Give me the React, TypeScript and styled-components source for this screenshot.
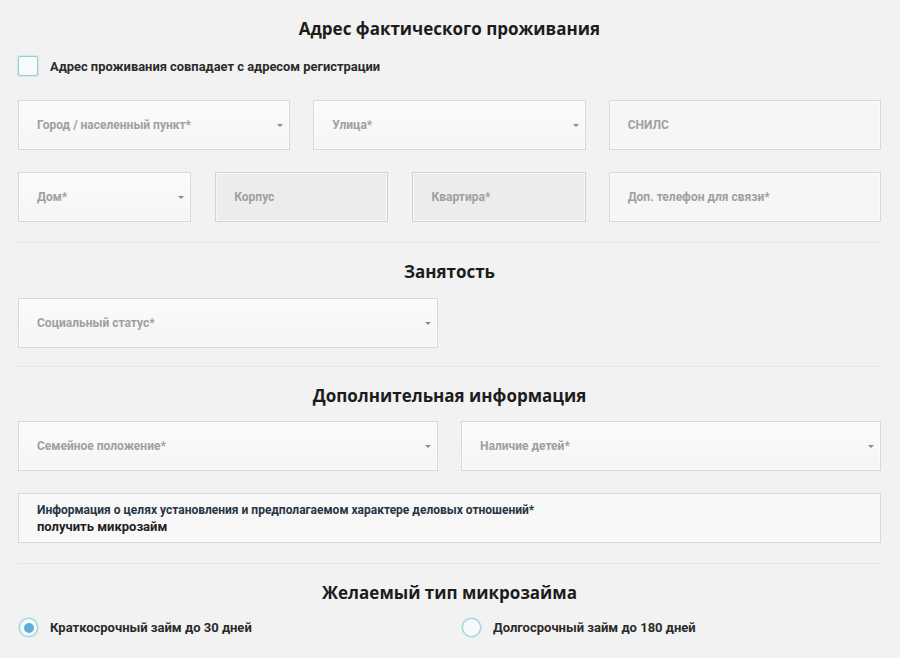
import styled, { createGlobalStyle } from 'styled-components';
import { useState } from 'react';

const GlobalStyle = createGlobalStyle`
  html, body {
    margin: 0;
    padding: 0;
    background: #f2f2f2;
  }
  body {
    font-family: Roboto, "Noto Sans", sans-serif;
  }
`;

type LoanType = 'short' | 'long';

function App() {
  const [same, setSame] = useState(false);
  const [loan, setLoan] = useState<LoanType>('short');

  return (
    <Page>
      <GlobalStyle />
      <Title>Адрес фактического проживания</Title>
      <CheckRow onClick={() => setSame(!same)}>
        <CheckBox $checked={same} />
        <CheckLabel>Адрес проживания совпадает с адресом регистрации</CheckLabel>
      </CheckRow>

      <Grid3 $top={24}>
        <Field $select>
          <Placeholder>Город / населенный пункт*</Placeholder>
          <Arrow />
        </Field>
        <Field $select>
          <Placeholder>Улица*</Placeholder>
          <Arrow />
        </Field>
        <Field>
          <Placeholder>СНИЛС</Placeholder>
        </Field>
      </Grid3>

      <Grid3 $top={22}>
        <Wide>
          <Field $select>
            <Placeholder>Дом*</Placeholder>
            <Arrow />
          </Field>
          <Field $disabled>
            <Placeholder>Корпус</Placeholder>
          </Field>
          <Field $disabled>
            <Placeholder>Квартира*</Placeholder>
          </Field>
        </Wide>
        <Field>
          <Placeholder>Доп. телефон для связи*</Placeholder>
        </Field>
      </Grid3>

      <Divider $top={20} />

      <Title>Занятость</Title>
      <Grid2 $top={14}>
        <Field $select>
          <Placeholder>Социальный статус*</Placeholder>
          <Arrow />
        </Field>
      </Grid2>

      <Divider $top={18} />

      <Title>Дополнительная информация</Title>
      <Grid2 $top={13}>
        <Field $select>
          <Placeholder>Семейное положение*</Placeholder>
          <Arrow />
        </Field>
        <Field $select>
          <Placeholder>Наличие детей*</Placeholder>
          <Arrow />
        </Field>
      </Grid2>

      <InfoBox>
        <InfoLabel>
          Информация о целях установления и предполагаемом характере деловых отношений*
        </InfoLabel>
        <InfoValue>получить микрозайм</InfoValue>
      </InfoBox>

      <Divider $top={20} />

      <Title>Желаемый тип микрозайма</Title>
      <Grid2 $top={13}>
        <RadioRow onClick={() => setLoan('short')}>
          <Radio $checked={loan === 'short'} />
          <RadioLabel>Краткосрочный займ до 30 дней</RadioLabel>
        </RadioRow>
        <RadioRow onClick={() => setLoan('long')}>
          <Radio $checked={loan === 'long'} />
          <RadioLabel>Долгосрочный займ до 180 дней</RadioLabel>
        </RadioRow>
      </Grid2>
      <BottomShade />
    </Page>
  );
}

export default App;

const Page = styled.div`
  width: 863px;
  padding: 17px 19px 0 18px;
  height: 658px;
  box-sizing: content-box;
  overflow: hidden;
  position: relative;
`;

const Title = styled.h2`
  margin: 0;
  text-align: center;
  font-family: "Open Sans", "Noto Sans", sans-serif;
  font-weight: 700;
  font-size: 17px;
  line-height: 24px;
  color: #1c1c1c;
`;

const CheckRow = styled.label`
  display: flex;
  align-items: center;
  gap: 12px;
  margin-top: 15px;
  cursor: pointer;
`;

const CheckBox = styled.span<{ $checked: boolean }>`
  width: 18px;
  height: 18px;
  border: 1px solid #8fcfdc;
  border-radius: 2px;
  background: ${(p) => (p.$checked ? '#5aaed8' : '#f9fbfb')};
  box-shadow: 0 0 0 1px rgba(143, 207, 220, 0.25);
`;

const CheckLabel = styled.span`
  font-size: 12.9px;
  font-weight: 700;
  color: #2b2b2b;
`;

const Grid3 = styled.div<{ $top: number }>`
  display: grid;
  grid-template-columns: 1fr 1fr 1fr;
  gap: 23px;
  margin-top: ${(p) => p.$top}px;
`;

const Wide = styled.div`
  grid-column: span 2;
  display: grid;
  grid-template-columns: 1fr 1fr 1fr;
  gap: 24px;
`;

const Grid2 = styled.div<{ $top: number }>`
  display: grid;
  grid-template-columns: 420px 420px;
  justify-content: space-between;
  margin-top: ${(p) => p.$top}px;
`;

const Field = styled.div<{ $select?: boolean; $disabled?: boolean }>`
  position: relative;
  height: 50px;
  box-sizing: border-box;
  display: flex;
  align-items: center;
  padding: 0 18px;
  border: 1px solid ${(p) => (p.$disabled ? '#d2d2d2' : '#d8d8d8')};
  background: ${(p) =>
    p.$disabled
      ? '#ececec'
      : p.$select
      ? 'linear-gradient(#fbfbfb, #f5f5f5)'
      : '#f6f6f6'};
  box-shadow: inset 0 0 0 1px rgba(255, 255, 255, 0.6);
`;

const Placeholder = styled.span`
  font-size: 12px;
  font-weight: 700;
  color: #a0a0a0;
`;

const Arrow = styled.span`
  position: absolute;
  right: 6px;
  top: 50%;
  margin-top: -1px;
  width: 0;
  height: 0;
  border-left: 3px solid transparent;
  border-right: 3px solid transparent;
  border-top: 3px solid #8a8a8a;
`;

const Divider = styled.hr<{ $top: number }>`
  margin: ${(p) => p.$top}px 0 17px;
  border: 0;
  height: 1px;
  background: #e6e6e6;
`;

const InfoBox = styled.div`
  margin-top: 22px;
  height: 50px;
  box-sizing: border-box;
  border: 1px solid #d8d8d8;
  background: #f8f8f8;
  padding: 9px 18px 0;
  display: flex;
  flex-direction: column;
  gap: 1px;
`;

const InfoLabel = styled.span`
  font-size: 12px;
  font-weight: 700;
  color: #263545;
  line-height: 15px;
`;

const InfoValue = styled.span`
  font-size: 13px;
  font-weight: 700;
  color: #222;
  line-height: 15px;
`;

const RadioRow = styled.label`
  display: flex;
  align-items: center;
  gap: 12px;
  cursor: pointer;
  padding-left: 1px;
`;

const Radio = styled.span<{ $checked: boolean }>`
  width: 17px;
  height: 17px;
  border-radius: 50%;
  border: 1px solid #8fcfdc;
  background: #f7fafa;
  display: flex;
  align-items: center;
  justify-content: center;
  box-shadow: 0 0 0 1px rgba(143, 207, 220, 0.3);
  &::after {
    content: '';
    width: 10px;
    height: 10px;
    border-radius: 50%;
    background: ${(p) => (p.$checked ? '#5faddb' : 'transparent')};
  }
`;

const RadioLabel = styled.span`
  font-size: 13px;
  font-weight: 700;
  color: #2b2b2b;
`;

const BottomShade = styled.div`
  position: absolute;
  left: 0;
  right: 0;
  bottom: 0;
  height: 14px;
  background: linear-gradient(rgba(0, 0, 0, 0), rgba(0, 0, 0, 0.04));
`;
